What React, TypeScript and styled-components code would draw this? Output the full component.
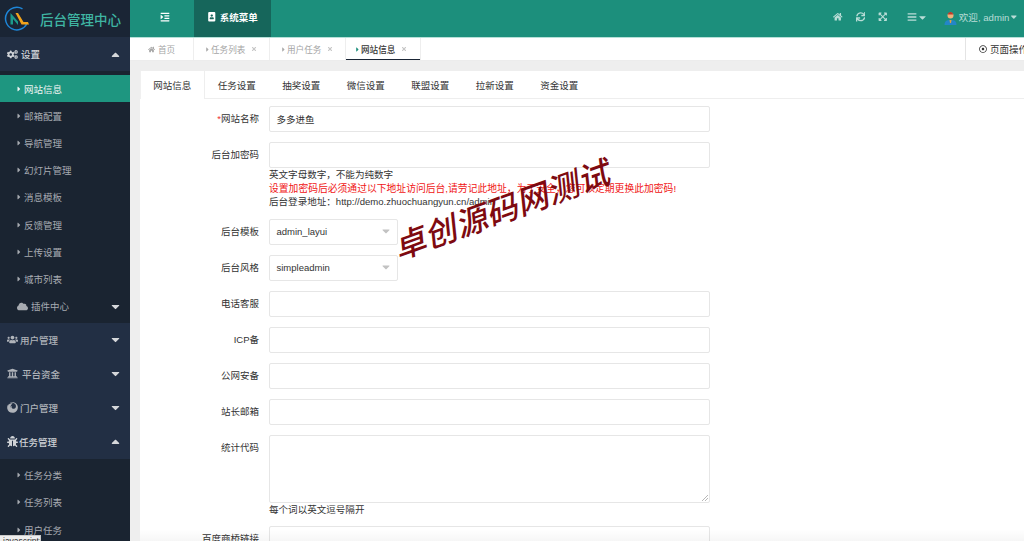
import React from "react";
import styled, { createGlobalStyle } from "styled-components";
import {
  FaBars,
  FaCaretDown,
  FaCaretRight,
  FaCaretUp,
  FaCloud,
  FaCogs,
  FaExpandArrowsAlt,
  FaHome,
  FaPortrait,
  FaIndent,
  FaRegDotCircle,
  FaSync,
  FaTimes,
  FaUsers,
  FaBug,
  FaFirefox,
  FaUniversity,
} from "react-icons/fa";

const GlobalStyle = createGlobalStyle`
  html, body {
    margin: 0;
    height: 100%;
    overflow: hidden;
    background: #eeeeee;
    font-family: "Liberation Sans", "Noto Sans CJK SC", sans-serif;
    font-size: 10px;
    color: #333;
  }
  * { box-sizing: border-box; }
`;

const Page = styled.div`
  width: 1024px;
  height: 541px;
  display: flex;
  overflow: hidden;
  position: relative;
`;

const Sidebar = styled.aside`
  width: 130px;
  flex: none;
  display: flex;
  flex-direction: column;
  background: #1a2431;
  color: #b8bcc2;
`;

const Brand = styled.div`
  height: 37px;
  flex: none;
  display: flex;
  align-items: center;
  gap: 11px;
  padding-left: 4px;
  background: #1a2535;
  color: #3fb5a3;
  font-size: 13.5px;
  font-weight: 500;
`;

const GroupRow = styled.div<{ $open?: boolean; $gap: number }>`
  height: 34px;
  flex: none;
  display: flex;
  align-items: center;
  padding: 0 8px 0 7px;
  gap: ${(p) => p.$gap}px;
  background: #222f44;
  color: ${(p) => (p.$open ? "#d0d3d7" : "#b0b4ba")};
  font-size: 9.5px;
  font-weight: 500;
  > svg { font-size: 11px; }
`;

const Caret = styled.span`
  margin-left: auto;
  display: flex;
  font-size: 13px;
  color: #d5d7da;
`;

const SubList = styled.div<{ $pad: number }>`
  display: flex;
  flex-direction: column;
  padding-top: ${(p) => p.$pad}px;
  background: #1a2431;
`;

const SubItem = styled.div<{ $active?: boolean }>`
  height: 27.2px;
  flex: none;
  display: flex;
  align-items: center;
  padding: 0 8px 0 15px;
  gap: 1px;
  font-size: 9.5px;
  background: ${(p) => (p.$active ? "#1e9680" : "transparent")};
  color: ${(p) => (p.$active ? "#f0f5f4" : "#a7abb1")};
  > svg { font-size: 8px; }
`;

const PluginIcon = styled.span`
  display: flex;
  margin: 0 2px;
  font-size: 11px;
`;

const SubEnd = styled.div`
  height: 3px;
`;

const Main = styled.div`
  flex: 1;
  min-width: 0;
  display: flex;
  flex-direction: column;
`;

const TopBar = styled.header`
  height: 37px;
  flex: none;
  display: flex;
  align-items: stretch;
  background: #1c8f7c;
  color: #fff;
`;

const MenuToggle = styled.div`
  width: 64px;
  display: flex;
  align-items: center;
  justify-content: center;
  padding: 0 0 3px 5px;
  font-size: 10px;
`;

const SystemMenu = styled.div`
  width: 77px;
  display: flex;
  align-items: center;
  justify-content: center;
  padding-bottom: 3px;
  gap: 3px;
  background: #16665b;
  font-size: 9.5px;
  font-weight: 700;
`;

const TopRight = styled.div`
  margin-left: auto;
  display: flex;
  align-items: center;
  padding: 0 5px 3px 0;
  color: #b9ddd7;
  font-size: 9.6px;
`;

const TopIcon = styled.span<{ $gap?: number }>`
  display: flex;
  align-items: center;
  font-size: 9.5px;
  margin-right: ${(p) => p.$gap ?? 13}px;
`;

const TabStrip = styled.div`
  height: 24px;
  flex: none;
  display: flex;
  background: #fff;
  border-top: 1px solid #b5e0d8;
  border-bottom: 1px solid #ececec;
`;

const PageTab = styled.div<{ $active?: boolean; $w: number; $pad?: number }>`
  width: ${(p) => p.$w}px;
  display: flex;
  align-items: center;
  padding-left: ${(p) => p.$pad ?? 10}px;
  font-size: 8.6px;
  border-right: 1px solid #eeeeee;
  color: ${(p) => (p.$active ? "#333" : "#a5a5a5")};
  font-weight: ${(p) => (p.$active ? 500 : 400)};
  box-shadow: ${(p) => (p.$active ? "inset 0 -1px 0 #1a2535" : "none")};
  svg.arrow { font-size: 7px; color: ${(p) => (p.$active ? "#1c8f7c" : "#aaa")}; }
  svg.home { font-size: 7px; margin-right: 3px; }
`;

const TabClose = styled.span`
  display: flex;
  margin-left: 6px;
  font-size: 6px;
  color: #c4c4c4;
`;

const PageActions = styled.div`
  margin-left: auto;
  width: 59px;
  flex: none;
  display: flex;
  align-items: center;
  gap: 3px;
  padding-left: 13px;
  font-size: 9.5px;
  white-space: nowrap;
  overflow: hidden;
  color: #333;
  border-left: 1px solid #e4e4e4;
  svg { flex: none; font-size: 8px; }
`;

const Content = styled.div`
  flex: 1;
  min-height: 0;
  padding: 10px 0 0 10px;
  overflow: hidden;
`;

const FormTabs = styled.div`
  height: 28px;
  display: flex;
  background: #fff;
  border-bottom: 1px solid #eeeeee;
`;

const FormTab = styled.div<{ $active?: boolean }>`
  width: 64.5px;
  height: ${(p) => (p.$active ? "28px" : "27px")};
  display: flex;
  align-items: center;
  justify-content: center;
  padding-bottom: ${(p) => (p.$active ? "1px" : "0")};
  font-size: 9.5px;
  color: #333;
  background: #fff;
  border-left: ${(p) => (p.$active ? "1px solid #f0f0f0" : "none")};
  border-right: ${(p) => (p.$active ? "1px solid #eeeeee" : "none")};
`;

const Panel = styled.div`
  background: #fff;
  padding-top: 7px;
  display: flex;
  flex-direction: column;
  height: 100%;
`;

const Field = styled.div<{ $gap?: number }>`
  display: flex;
  margin-bottom: ${(p) => p.$gap ?? 10}px;
`;

const Label = styled.label`
  width: 119px;
  flex: none;
  height: 24.5px;
  margin-right: 10px;
  display: flex;
  align-items: center;
  justify-content: flex-end;
  font-size: 9.5px;
  color: #333;
  em { color: #e33; font-style: normal; }
`;

const FieldBody = styled.div`
  display: flex;
  flex-direction: column;
`;

const TextInput = styled.div`
  width: 441px;
  height: 26px;
  display: flex;
  align-items: center;
  padding: 0 6.5px 1px;
  border: 1px solid #e6e6e6;
  border-radius: 2px;
  font-size: 9.5px;
  color: #333;
  background: #fff;
`;

const TextArea = styled(TextInput)`
  height: 68px;
  position: relative;
`;

const ResizeGrip = styled.svg`
  position: absolute;
  right: 1px;
  bottom: 1px;
`;

const SelectBox = styled(TextInput)`
  width: 129px;
  padding-right: 5px;
  justify-content: space-between;
  svg { font-size: 12px; color: #c2c2c2; }
`;

const Hint = styled.div<{ $red?: boolean }>`
  font-size: ${(p) => (p.$red ? 9.8 : 9.55)}px;
  line-height: 13.5px;
  color: ${(p) => (p.$red ? "#f01414" : "#333")};
  white-space: nowrap;
`;

const Watermark = styled.div`
  position: absolute;
  left: 388px;
  top: 191px;
  width: 226px;
  font-size: 32px;
  font-style: italic;
  font-weight: 500;
  line-height: 40px;
  letter-spacing: 0.5px;
  color: #7e0a10;
  white-space: nowrap;
  transform: rotate(-20deg);
`;

const BottomFade = styled.div`
  position: absolute;
  left: 140px;
  right: 0;
  bottom: 0;
  height: 12px;
  pointer-events: none;
  background: linear-gradient(to bottom, rgba(0, 0, 0, 0), rgba(0, 0, 0, 0.035));
`;

const StatusBubble = styled.div`
  position: absolute;
  left: 0;
  top: 535px;
  width: 41px;
  height: 6px;
  overflow: hidden;
  background: #eeeeee;
  border-top: 1px solid #c9c9c9;
  border-right: 1px solid #c9c9c9;
  color: #333;
  font-size: 8.5px;
  line-height: 10px;
  padding-left: 3px;
`;

const Logo = () => (
  <svg width="25" height="25" viewBox="0 0 25 25" fill="none">
    <path d="M18.500 2.800A11.300 11.300 0 1 0 23 17.500" stroke="#1e86d8" strokeWidth="1.500" />
    <path d="M6.500 18.500V7l7.500 8.500v3.500L9 13v5.500z" fill="#1c9a8c" />
    <path d="M11.500 7h2.500l5.500 9H24l1 2.500h-7.500z" fill="#f2a31b" />
  </svg>
);

const Avatar = () => (
  <svg width="13" height="15" viewBox="0 0 13 15">
    <path d="M0.500 15c0-4 2-5 6-5s6 1 6 5z" fill="#2386c8" />
    <circle cx="6.500" cy="5.500" r="3" fill="#f0b27a" />
    <path d="M3.800 4.500c0-3.500 5.400-3.500 5.400 0z" fill="#b93a2b" />
    <path d="M5.500 10h2l-.5 3h-1z" fill="#e2a23a" />
  </svg>
);

const settingsItems = ["邮箱配置", "导航管理", "幻灯片管理", "消息模板", "反馈管理", "上传设置", "城市列表"];
const formTabs = ["网站信息", "任务设置", "抽奖设置", "微信设置", "联盟设置", "拉新设置", "资金设置"];
const plainFields = ["电话客服", "ICP备", "公网安备", "站长邮箱"];

export default function App() {
  return (
    <Page>
      <GlobalStyle />
      <Sidebar>
        <Brand>
          <Logo />
          <span>后台管理中心</span>
        </Brand>
        <GroupRow $open $gap={3}>
          <FaCogs />
          设置
          <Caret><FaCaretUp /></Caret>
        </GroupRow>
        <SubList $pad={4}>
          <SubItem $active><FaCaretRight />网站信息</SubItem>
          {settingsItems.map((t) => (
            <SubItem key={t}><FaCaretRight />{t}</SubItem>
          ))}
          <SubItem>
            <PluginIcon><FaCloud /></PluginIcon>
            插件中心
            <Caret><FaCaretDown /></Caret>
          </SubItem>
          <SubEnd />
        </SubList>
        <GroupRow $gap={2}><FaUsers />用户管理<Caret><FaCaretDown /></Caret></GroupRow>
        <GroupRow $gap={4}><FaUniversity />平台资金<Caret><FaCaretDown /></Caret></GroupRow>
        <GroupRow $gap={2}><FaFirefox />门户管理<Caret><FaCaretDown /></Caret></GroupRow>
        <GroupRow $open $gap={1}><FaBug />任务管理<Caret><FaCaretUp /></Caret></GroupRow>
        <SubList $pad={3}>
          <SubItem><FaCaretRight />任务分类</SubItem>
          <SubItem><FaCaretRight />任务列表</SubItem>
          <SubItem><FaCaretRight />用户任务</SubItem>
        </SubList>
      </Sidebar>
      <Main>
        <TopBar>
          <MenuToggle><FaIndent /></MenuToggle>
          <SystemMenu><FaPortrait />系统菜单</SystemMenu>
          <TopRight>
            <TopIcon><FaHome /></TopIcon>
            <TopIcon><FaSync /></TopIcon>
            <TopIcon $gap={19}><FaExpandArrowsAlt /></TopIcon>
            <TopIcon $gap={16}><FaBars size={10} /><FaCaretDown size={11} /></TopIcon>
            <TopIcon $gap={2}><Avatar /></TopIcon>
            欢迎, admin <FaCaretDown />
          </TopRight>
        </TopBar>
        <TabStrip>
          <PageTab $w={64} $pad={18}><FaHome className="home" />首页</PageTab>
          <PageTab $w={76}><FaCaretRight className="arrow" />任务列表<TabClose><FaTimes /></TabClose></PageTab>
          <PageTab $w={76}><FaCaretRight className="arrow" />用户任务<TabClose><FaTimes /></TabClose></PageTab>
          <PageTab $w={75} $pad={8} $active><FaCaretRight className="arrow" />网站信息<TabClose><FaTimes /></TabClose></PageTab>
          <PageActions><FaRegDotCircle />页面操作</PageActions>
        </TabStrip>
        <Content>
          <FormTabs>
            {formTabs.map((t, i) => (
              <FormTab key={t} $active={i === 0}>{t}</FormTab>
            ))}
          </FormTabs>
          <Panel>
            <Field>
              <Label><em>*</em>网站名称</Label>
              <TextInput>多多进鱼</TextInput>
            </Field>
            <Field $gap={10}>
              <Label>后台加密码</Label>
              <FieldBody>
                <TextInput />
                <Hint>英文字母数字，不能为纯数字</Hint>
                <Hint $red>设置加密码后必须通过以下地址访问后台,请劳记此地址，为了安全，您可以定期更换此加密码!</Hint>
                <Hint>后台登录地址：http://demo.zhuochuangyun.cn/admin</Hint>
              </FieldBody>
            </Field>
            <Field>
              <Label>后台模板</Label>
              <SelectBox>admin_layui<FaCaretDown /></SelectBox>
            </Field>
            <Field>
              <Label>后台风格</Label>
              <SelectBox>simpleadmin<FaCaretDown /></SelectBox>
            </Field>
            {plainFields.map((t) => (
              <Field key={t}>
                <Label>{t}</Label>
                <TextInput />
              </Field>
            ))}
            <Field $gap={10}>
              <Label>统计代码</Label>
              <FieldBody>
                <TextArea>
                  <ResizeGrip width="6" height="6" viewBox="0 0 6 6">
                    <path d="M0 6L6 0M3 6l3-3" stroke="#999" strokeWidth="0.7" />
                  </ResizeGrip>
                </TextArea>
                <Hint>每个词以英文逗号隔开</Hint>
              </FieldBody>
            </Field>
            <Field>
              <Label>百度商桥链接</Label>
              <TextInput />
            </Field>
          </Panel>
        </Content>
      </Main>
      <Watermark>卓创源码网测试</Watermark>
      <BottomFade />
      <StatusBubble>javascript:;</StatusBubble>
    </Page>
  );
}
